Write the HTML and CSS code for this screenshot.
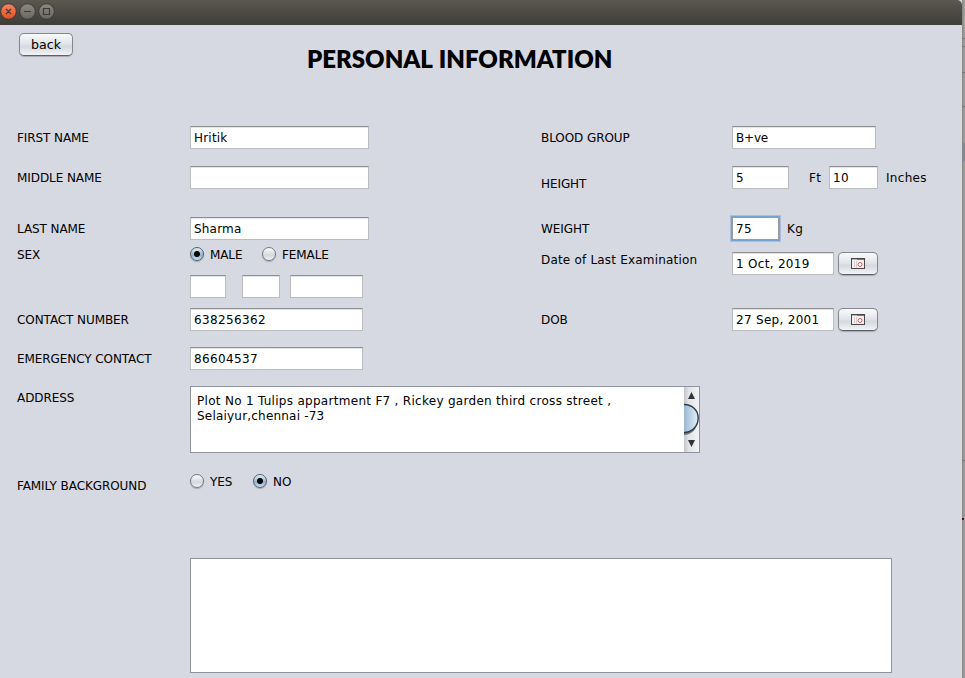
FILE: index.html
```
<!DOCTYPE html>
<html lang="en">
<head>
<meta charset="utf-8">
<title>Personal Information</title>
<link rel="stylesheet" href="styles.css">
</head>
<body>
<div class="desktop">
<main class="window">
  <header class="titlebar">
    <svg width="60" height="24" viewBox="0 0 60 24">
      <defs>
        <linearGradient id="close" x1="0" y1="0" x2="0" y2="1"><stop offset="0" stop-color="#f58562"/><stop offset="1" stop-color="#e2501f"/></linearGradient>
        <linearGradient id="ctl" x1="0" y1="0" x2="0" y2="1"><stop offset="0" stop-color="#8b8a82"/><stop offset="1" stop-color="#686760"/></linearGradient>
      </defs>
      <g stroke="#3b3a35" stroke-width="1">
        <circle cx="8.5" cy="11.5" r="7.8" fill="url(#close)"/>
        <circle cx="27.5" cy="11.5" r="7.8" fill="url(#ctl)"/>
        <circle cx="46.5" cy="11.5" r="7.8" fill="url(#ctl)"/>
      </g>
      <g fill="none" stroke="#3b3a35" stroke-width="1.2">
        <path d="M6 9l5 5M11 9l-5 5M24 11.5h7"/>
        <path d="M43.5 8.5h6v6h-6z"/>
      </g>
    </svg>
  </header>
  <div class="heading">
    <button class="btn back">back</button>
    <h1>PERSONAL INFORMATION</h1>
  </div>
  <div class="form">
    <section class="column">
      <div class="row"><label class="name">FIRST NAME</label><div class="field w179">Hritik</div></div>
      <div class="row gap17"><label class="name">MIDDLE NAME</label><div class="field w179"></div></div>
      <div class="row gap28"><label class="name">LAST NAME</label><div class="field w179">Sharma</div></div>
      <div class="row gap3"><label class="name">SEX</label>
        <span class="radio on"></span><span class="option male">MALE</span>
        <span class="radio"></span><span class="option female">FEMALE</span></div>
      <div class="row gap9"><span class="name"></span><div class="field w36"></div><div class="field w38"></div><div class="field w73"></div></div>
      <div class="row gap10"><label class="name">CONTACT NUMBER</label><div class="field w173 digits">638256362</div></div>
      <div class="row gap16"><label class="name">EMERGENCY CONTACT</label><div class="field w173 digits">86604537</div></div>
    </section>
    <section class="column right">
      <div class="row"><label class="name">BLOOD GROUP</label><div class="field w144 blood">B+ve</div></div>
      <div class="row gap17"><label class="name lower">HEIGHT</label><div class="field w57">5</div><span class="unit ft">Ft</span><div class="field w49 digits">10</div><span class="unit">Inches</span></div>
      <div class="row gap28"><label class="name">WEIGHT</label><div class="field w47 focused digits">75</div><span class="unit">Kg</span></div>
      <div class="row gap12"><label class="name upper">Date of Last Examination</label><div class="field w102 date">1 Oct, 2019</div>
        <button class="btn pick" aria-label="Pick date"><svg width="14" height="11" viewBox="0 0 14 11"><rect x=".5" y=".5" width="13" height="10" fill="#f4f2f0" stroke="#49464c"/><path d="M1 1.5h12" stroke="#6c7793"/><path d="M1 1.5h5" stroke="#e6b354"/><path d="M3.5 3v7M5.5 3v7" stroke="#d5d1d3"/><circle cx="9" cy="6.5" r="2" fill="#fff" stroke="#df5558"/></svg></button></div>
      <div class="row gap33"><label class="name">DOB</label><div class="field w102 date">27 Sep, 2001</div>
        <button class="btn pick" aria-label="Pick date"><svg width="14" height="11" viewBox="0 0 14 11"><rect x=".5" y=".5" width="13" height="10" fill="#f4f2f0" stroke="#49464c"/><path d="M1 1.5h12" stroke="#6c7793"/><path d="M1 1.5h5" stroke="#e6b354"/><path d="M3.5 3v7M5.5 3v7" stroke="#d5d1d3"/><circle cx="9" cy="6.5" r="2" fill="#fff" stroke="#df5558"/></svg></button></div>
    </section>
  </div>
  <div class="row address"><label class="name">ADDRESS</label>
    <div class="area">
      <p><span class="line1">Plot No 1 Tulips appartment F7 , Rickey garden third cross street ,</span><br><span class="line2">Selaiyur,chennai -73</span></p>
      <svg class="scroll" width="15" height="65" viewBox="0 0 15 65">
        <defs>
          <linearGradient id="track"><stop offset="0" stop-color="#c4c5ca"/><stop offset=".3" stop-color="#e2e3e6"/><stop offset="1" stop-color="#f4f4f6"/></linearGradient>
          <linearGradient id="thumb"><stop offset="0" stop-color="#9db7d0"/><stop offset=".5" stop-color="#c0d4e6"/><stop offset="1" stop-color="#e4effa"/></linearGradient>
        </defs>
        <rect width="15" height="65" fill="url(#track)"/>
        <path d="M0 17c8 0 14 6 14 15S8 48 0 48" fill="#6f747b"/>
        <path d="M0 17.5C8 17.5 14.2 23 14.2 31S8 45.5 0 45.5" fill="url(#thumb)" stroke="#2d3d4e" stroke-width="1.4"/>
        <path d="M4 12l3.5-7 3.5 7zM4 53l3.5 7 3.5-7z" fill="#333438"/>
      </svg>
    </div>
  </div>
  <div class="row family"><label class="name">FAMILY BACKGROUND</label>
    <span class="radio"></span><span class="option yes">YES</span>
    <span class="radio on"></span><span class="option">NO</span></div>
  <div class="notes"></div>
</main>
<aside class="edge"><i class="e1"></i><i class="e2"></i><i class="e3"></i><i class="e4"></i><i class="e5"></i><i class="e6"></i><i class="e7"></i></aside>
</div>
</body>
</html>
```
FILE: styles.css
```
* { box-sizing: border-box; }
body { margin: 0; overflow: hidden; font: 12px/15px "DejaVu Sans", sans-serif; color: #000; }
.desktop { display: flex; width: 965px; height: 678px; background: #a09f9c; }
.window { width: 962px; height: 678px; background: #d6d9e1; }
.titlebar { height: 25px; background: linear-gradient(#5a584f, #3e3d38); border-top-right-radius: 5px; }
.titlebar svg { display: block; }
.heading { display: flex; align-items: flex-start; height: 101px; padding: 8px 0 0 19px; }
h1 { margin: 11px 0 0 234px; font: 800 24px/30px Lato, sans-serif; white-space: nowrap; letter-spacing: 0; word-spacing: 1px; }
.btn { display: flex; align-items: center; justify-content: center; padding: 0; border: 1px solid #85888e; border-bottom-color: #5d6067; border-radius: 5px; background: linear-gradient(#fafafb, #e3e5e9 45%, #d5d8de 60%, #f2f4f7); box-shadow: 0 1px 1px #a6a9b0; color: #000; }
.back { width: 54px; height: 23px; font: 12.6px/15px "DejaVu Sans", sans-serif; }
.form { display: flex; height: 260px; padding-left: 17px; }
.column { width: 524px; }
.right { width: 410px; }
.row { display: flex; align-items: center; height: 23px; white-space: nowrap; }
.name { width: 173px; flex: none; padding-top: 2px; letter-spacing: -.08px; }
.right .name { width: 191px; }
.right .lower { padding-top: 14px; }
.right .upper { padding-top: 0; padding-bottom: 6px; letter-spacing: .19px; }
.gap17 { margin-top: 17px; } .gap28 { margin-top: 28px; } .gap3 { margin-top: 3px; }
.gap9 { margin-top: 9px; } .gap10 { margin-top: 10px; } .gap16 { margin-top: 16px; }
.gap12 { margin-top: 12px; } .gap33 { margin-top: 33px; }
.field { flex: none; height: 23px; padding: 4px 0 0 3px; background: #fff; border: 1px solid #bbbcbd; border-top-color: #8e8f91; box-shadow: inset 0 1px 0 #e3e4e6; letter-spacing: .2px; }
.blood { letter-spacing: -.2px; }
.focused { border-color: #9a9da1; box-shadow: 0 0 0 1px #75a3d0, 0 0 0 2px #a5c1df; }
.w179 { width: 179px; } .w173 { width: 173px; } .w144 { width: 144px; } .w102 { width: 102px; }
.w57 { width: 57px; } .w49 { width: 49px; } .w47 { width: 47px; }
.w36 { width: 36px; margin-right: 16px; } .w38 { width: 38px; margin-right: 10px; } .w73 { width: 73px; }
.digits { letter-spacing: .37px; }
.date { letter-spacing: .3px; }
.unit { margin-left: 8px; padding-top: 2px; letter-spacing: .3px; }
.ft { width: 20px; margin-left: 20px; }
.pick { width: 40px; height: 23px; margin-left: 4px; }
.radio { flex: none; width: 14px; height: 14px; margin-bottom: 1px; border: 1px solid #73777e; border-radius: 50%; background: linear-gradient(#fbfbfc, #d5d8dd 60%, #f3f4f6); box-shadow: 0 1px 1px #a4a8af; }
.radio.on { border-color: #4d6277; background: radial-gradient(circle, #080a0c 0 2.6px, transparent 3.5px), linear-gradient(#e7eff6, #94b0ca 60%, #cce0f1); }
.option { margin-left: 6px; padding-top: 2px; letter-spacing: -.1px; }
.male { width: 52px; }
.yes { width: 43px; }
.address { align-items: flex-start; height: 67px; padding-left: 17px; }
.address .name { padding-top: 5px; }
.area { display: flex; width: 510px; height: 67px; border: 1px solid #8f939d; background: #fff; }
.area p { width: 493px; margin: 0; padding: 7px 0 0 6px; }
.line1 { letter-spacing: .29px; }
.line2 { letter-spacing: .2px; }
.scroll { display: block; }
.family { height: 23px; margin-top: 17px; padding-left: 17px; }
.family .name { padding-top: 9px; }
.family .option { padding-top: 1px; }
.notes { width: 702px; height: 115px; margin: 65px 0 0 190px; border: 1px solid #8f939d; background: #fff; }
.edge { display: flex; flex-direction: column; width: 3px; height: 678px; background: linear-gradient(90deg, #858582, #a5a5a1); }
.edge i { flex: none; height: 1px; background: #747472; }
.e1 { margin-top: 38px; } .e2 { margin-top: 7px; } .e3 { margin-top: 25px; } .e4 { margin-top: 33px; }
.edge .e5 { height: 18px; margin-top: 36px; background: #85898f; }
.e6 { margin-top: 299px; }
.edge .e7 { width: 2px; height: 2px; margin-top: 57px; background: #83001b; }
```
